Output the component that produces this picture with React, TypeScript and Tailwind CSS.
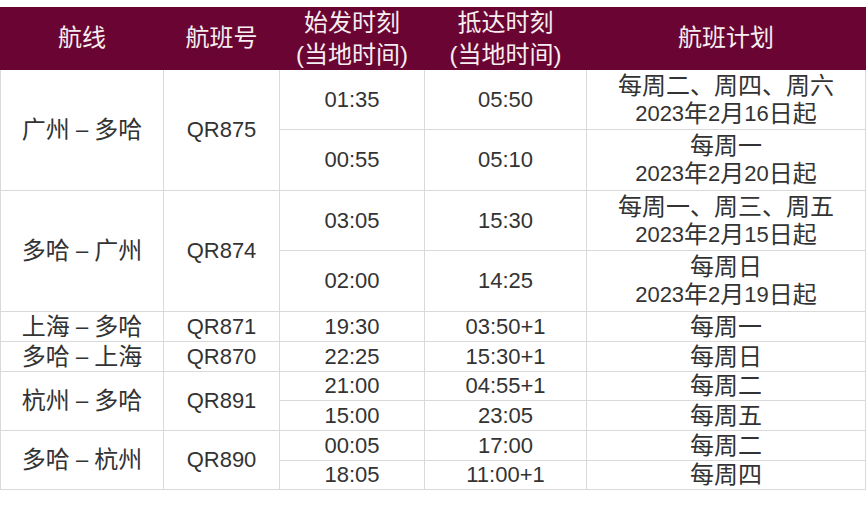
import React from "react";

const CJK = /([\u3000-\u303f\u4e00-\u9fff\uff00-\uffef]+)/;

function T({ s }: { s: string }) {
  const parts = s.split(CJK);
  return (
    <>
      {parts.map((p, i) =>
        CJK.test(p) ? (
          <span key={i} className="text-[24px] leading-[28px] align-top">
            {p}
          </span>
        ) : (
          <React.Fragment key={i}>{p}</React.Fragment>
        )
      )}
    </>
  );
}

type Sub = { dep: string; arr: string; plan: string[] };
type Group = { route: string; flight: string; subs: Sub[]; h: number[] };

const groups: Group[] = [
  {
    route: "广州 – 多哈",
    flight: "QR875",
    h: [60, 61],
    subs: [
      { dep: "01:35", arr: "05:50", plan: ["每周二、周四、周六", "2023年2月16日起"] },
      { dep: "00:55", arr: "05:10", plan: ["每周一", "2023年2月20日起"] },
    ],
  },
  {
    route: "多哈 – 广州",
    flight: "QR874",
    h: [60, 61],
    subs: [
      { dep: "03:05", arr: "15:30", plan: ["每周一、周三、周五", "2023年2月15日起"] },
      { dep: "02:00", arr: "14:25", plan: ["每周日", "2023年2月19日起"] },
    ],
  },
  {
    route: "上海 – 多哈",
    flight: "QR871",
    h: [30],
    subs: [{ dep: "19:30", arr: "03:50+1", plan: ["每周一"] }],
  },
  {
    route: "多哈 – 上海",
    flight: "QR870",
    h: [30],
    subs: [{ dep: "22:25", arr: "15:30+1", plan: ["每周日"] }],
  },
  {
    route: "杭州 – 多哈",
    flight: "QR891",
    h: [29, 30],
    subs: [
      { dep: "21:00", arr: "04:55+1", plan: ["每周二"] },
      { dep: "15:00", arr: "23:05", plan: ["每周五"] },
    ],
  },
  {
    route: "多哈 – 杭州",
    flight: "QR890",
    h: [30, 29],
    subs: [
      { dep: "00:05", arr: "17:00", plan: ["每周二"] },
      { dep: "18:05", arr: "11:00+1", plan: ["每周四"] },
    ],
  },
];

const td =
  "border border-[#d9d9d9] text-center align-middle p-0 leading-[28px] text-[22px] text-[#333333]";
const th =
  "border border-[#6a0533] text-center align-middle p-0 leading-[30px] text-[22px] font-normal text-[#f6eef1]";

export default function App() {
  return (
    <div className="w-[868px] h-[506px] bg-white pt-[7px] font-['Liberation_Sans','Noto_Sans_CJK_SC',sans-serif]">
      <table className="border-collapse table-fixed w-[865px]">
        <colgroup>
          <col className="w-[163px]" />
          <col className="w-[116px]" />
          <col className="w-[145px]" />
          <col className="w-[162px]" />
          <col className="w-[279px]" />
        </colgroup>
        <thead>
          <tr className="bg-[#6a0533] h-[61px]">
            <th className={th}>
              <T s="航线" />
            </th>
            <th className={th}>
              <T s="航班号" />
            </th>
            <th className={th}>
              <div className="leading-[31px] pt-[1px]">
                <T s="始发时刻" />
              </div>
              <div className="text-[24px] leading-[29px]">(当地时间)</div>
            </th>
            <th className={th}>
              <div className="leading-[31px] pt-[1px]">
                <T s="抵达时刻" />
              </div>
              <div className="text-[24px] leading-[29px]">(当地时间)</div>
            </th>
            <th className={th}>
              <T s="航班计划" />
            </th>
          </tr>
        </thead>
        <tbody>
          {groups.map((g) =>
            g.subs.map((s, i) => (
              <tr key={g.flight + i} style={{ height: g.h[i] }}>
                {i === 0 && (
                  <>
                    <td className={td} rowSpan={g.subs.length}>
                      <T s={g.route} />
                    </td>
                    <td className={td} rowSpan={g.subs.length}>
                      {g.flight}
                    </td>
                  </>
                )}
                <td className={td}>{s.dep}</td>
                <td className={td}>{s.arr}</td>
                <td className={td}>
                  {s.plan.map((l, k) => (
                    <div key={k} className="leading-[28px]">
                      <T s={l} />
                    </div>
                  ))}
                </td>
              </tr>
            ))
          )}
        </tbody>
      </table>
    </div>
  );
}
